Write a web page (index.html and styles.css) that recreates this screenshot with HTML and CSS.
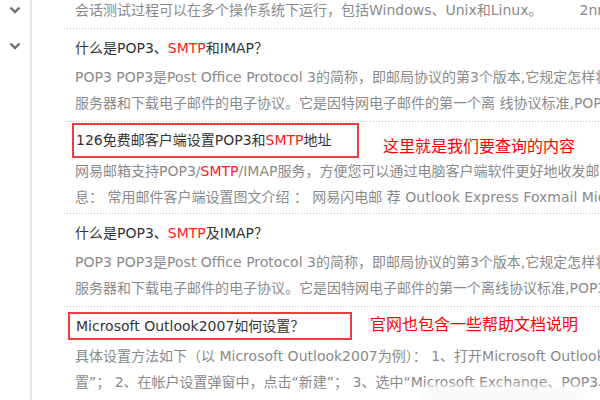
FILE: index.html
```html
<!DOCTYPE html>
<html lang="zh-CN">
<head>
<meta charset="utf-8">
<title>POP3 SMTP</title>
<link rel="stylesheet" href="styles.css">
</head>
<body>
<div class="page">
  <div class="rail">
    <svg class="chev" width="12" height="8" viewBox="0 0 12 8"><polyline points="1.5,1.5 6,6 10.5,1.5" fill="none" stroke="#6f6f6f" stroke-width="2.4"/></svg>
    <svg class="chev" width="12" height="8" viewBox="0 0 12 8"><polyline points="1.5,1.5 6,6 10.5,1.5" fill="none" stroke="#6f6f6f" stroke-width="2.4"/></svg>
  </div>
  <div class="list">
    <div class="item first">
      <div class="line lead"><span>会话测试过程可以在多个操作系统下运行，包括Windows、Unix和Linux。</span><span class="meta">2nm</span></div>
    </div>
    <div class="sep"></div>
    <div class="item i2">
      <div class="title">什么是POP3、<span class="red">SMTP</span>和IMAP？</div>
      <div class="desc">
        <div class="line">POP3 POP3是Post Office Protocol 3的简称，即邮局协议的第3个版本,它规定怎样将个人计算机连接到Internet的邮件</div>
        <div class="line">服务器和下载电子邮件的电子协议。它是因特网电子邮件的第一个离 线协议标准,POP3允许用户从服务器上把邮件</div>
      </div>
    </div>
    <div class="sep"></div>
    <div class="item i3">
      <div class="trow">
        <div class="title boxed b1">126免费邮客户端设置POP3和<span class="red">SMTP</span>地址</div>
        <div class="note n1">这里就是我们要查询的内容</div>
      </div>
      <div class="desc">
        <div class="line">网易邮箱支持POP3/<span class="red">SMTP</span>/IMAP服务，方便您可以通过电脑客户端软件更好地收发邮件，服务器地址信</div>
        <div class="line">息： 常用邮件客户端设置图文介绍 ： 网易闪电邮 荐 Outlook Express Foxmail Microsoft Outlook</div>
      </div>
    </div>
    <div class="sep"></div>
    <div class="item i4">
      <div class="title">什么是POP3、<span class="red">SMTP</span>及IMAP？</div>
      <div class="desc">
        <div class="line">POP3 POP3是Post Office Protocol 3的简称，即邮局协议的第3个版本,它规定怎样将个人计算机连接到Internet的邮件</div>
        <div class="line">服务器和下载电子邮件的电子协议。它是因特网电子邮件的第一个离线协议标准,POP3允许用户从服务器上把邮件</div>
      </div>
    </div>
    <div class="sep"></div>
    <div class="item i5">
      <div class="trow">
        <div class="title boxed b2">Microsoft Outlook2007如何设置？</div>
        <div class="note n2">官网也包含一些帮助文档说明</div>
      </div>
      <div class="desc">
        <div class="line">具体设置方法如下（以 Microsoft Outlook2007为例）： 1、打开Microsoft Outlook2007，点击“工具”-“帐户设</div>
        <div class="line">置”； 2、在帐户设置弹窗中，点击“新建”； 3、选中“Microsoft Exchange、POP3、IMAP或HTTP”，点击下一步</div>
      </div>
    </div>
  </div>
  <div class="smudge"></div>
</div>
</body>
</html>
```
FILE: styles.css
```css
html, body {
  margin: 0;
  padding: 0;
  background: #fff;
}
body {
  width: 600px;
  height: 400px;
  overflow: hidden;
  font-family: "DejaVu Sans", "Noto Sans CJK SC", sans-serif;
  font-size: 14px;
}
.page {
  position: relative;
  display: flex;
  height: 400px;
}
.rail {
  flex: none;
  width: 32px;
  box-sizing: border-box;
  border-right: 2px solid #e6e6e6;
  display: flex;
  flex-direction: column;
  align-items: center;
  padding-top: 6px;
  gap: 28px;
}
.chev {
  display: block;
  margin-left: -1px;
}
.list {
  margin-left: 32px;
  flex: 1;
  min-width: 0;
  overflow: hidden;
}
.sep {
  height: 1px;
  background-image: linear-gradient(to right, #c4c4c4 1px, transparent 1px);
  background-size: 3px 1px;
}
.item {
  padding-left: 11px;
}
.line {
  white-space: nowrap;
  overflow: hidden;
  line-height: 26px;
  color: #8a8a8a;
}
.first {
  padding-bottom: 8px;
}
.lead {
  line-height: 20px;
  display: flex;
}
.meta {
  margin-left: 37px;
}
.title {
  color: #333;
  line-height: 26px;
  white-space: nowrap;
}
.red {
  color: #ff1a1a;
}
.desc {
  margin-top: 3px;
}
.i2 {
  padding-top: 6px;
  padding-bottom: 5px;
}
.i3 {
  padding-top: 1px;
  padding-bottom: 3px;
  padding-left: 8px;
}
.i4 {
  padding-top: 6px;
  padding-bottom: 5px;
}
.i5 {
  padding-top: 5px;
  padding-left: 4px;
}
.trow {
  display: flex;
  align-items: center;
}
.boxed {
  border: 2px solid #ee3b3b;
  box-sizing: border-box;
  flex: none;
}
.b1 {
  width: 287px;
  line-height: 31px;
  padding-left: 2px;
}
.b2 {
  width: 284px;
  line-height: 24px;
  padding-left: 6px;
}
.i3 .desc { margin-top: 0; padding-left: 3px; }
.i5 .desc { margin-top: 3px; padding-left: 7px; }
.note {
  color: #ff0000;
  font-family: "Noto Sans CJK SC", sans-serif;
  font-size: 16px;
  line-height: 20px;
  white-space: nowrap;
}
.n1 {
  margin-left: 24px;
  margin-top: 9px;
}
.n2 {
  margin-left: 18px;
  margin-bottom: 6px;
}
.smudge {
  position: absolute;
  left: 422px;
  top: 386px;
  width: 162px;
  height: 22px;
  background: rgba(250, 250, 250, 0.92);
  filter: blur(3px);
}
```
